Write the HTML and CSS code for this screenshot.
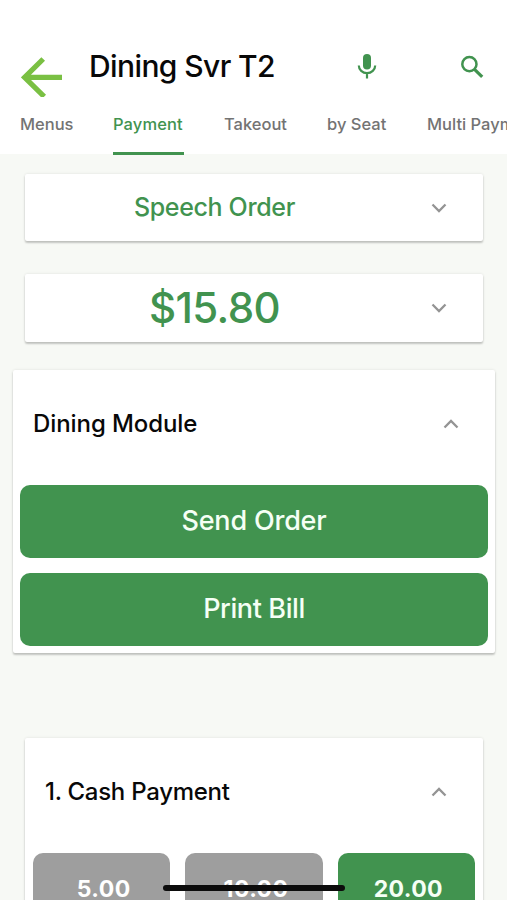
FILE: index.html
```html
<!DOCTYPE html>
<html lang="en">
<head>
<meta charset="utf-8">
<meta name="viewport" content="width=device-width, initial-scale=1">
<title>Dining Svr T2</title>
<link rel="stylesheet" href="styles.css">
</head>
<body>
<header class="header">
  <div class="topbar">
    <svg class="back" viewBox="0 0 42 40"><path d="M22.2 2 3.6 20.3 23.2 39.6M3.6 20.3H41" fill="none" stroke="#7ac043" stroke-width="5.2"/></svg>
    <h1 class="title">Dining Svr T2</h1>
    <svg class="mic" viewBox="0 0 20 26"><rect x="6" y="1" width="8" height="15.5" rx="4" fill="#41934f"/><path d="M1.8 12.5a8.2 7.6 0 0 0 16.4 0M10 20v5.5" fill="none" stroke="#41934f" stroke-width="2.2"/></svg>
    <svg class="search" viewBox="0 0 24 24"><circle cx="9.4" cy="9.2" r="7.1" fill="none" stroke="#41934f" stroke-width="2.5"/><path d="m14.5 14.3 7.7 7.6" stroke="#41934f" stroke-width="3.2"/></svg>
  </div>
  <nav class="tabs">
    <span class="tab menus">Menus</span>
    <span class="tab payment active">Payment</span>
    <span class="tab takeout">Takeout</span>
    <span class="tab seat">by Seat</span>
    <span class="tab multi">Multi Payment</span>
  </nav>
</header>
<main class="content">
  <section class="card row">
    <span class="label speech">Speech Order</span>
    <svg class="chevron" viewBox="0 0 16 10"><path d="m1.5 1.5 6.5 6.5 6.5-6.5"/></svg>
  </section>
  <section class="card row total">
    <span class="label amount">$15.80</span>
    <svg class="chevron" viewBox="0 0 16 10"><path d="m1.5 1.5 6.5 6.5 6.5-6.5"/></svg>
  </section>
  <section class="card module">
    <div class="card-head"><h2 class="heading dining">Dining Module</h2>
      <svg class="chevron" viewBox="0 0 16 10"><path d="m1.5 8.5 6.5-6.5 6.5 6.5"/></svg></div>
    <button class="button"><span class="send">Send Order</span></button>
    <button class="button"><span class="print">Print Bill</span></button>
  </section>
  <section class="card cash">
    <div class="card-head"><h2 class="heading cash-title">1. Cash Payment</h2>
      <svg class="chevron" viewBox="0 0 16 10"><path d="m1.5 8.5 6.5-6.5 6.5 6.5"/></svg></div>
    <div class="amounts">
      <button class="chip">5.00</button>
      <button class="chip">10.00</button>
      <button class="chip chosen">20.00</button>
    </div>
  </section>
</main>
<div class="home-bar"></div>
</body>
</html>
```
FILE: styles.css
```css
* { box-sizing: border-box; }
html, body { height: 100%; }
body {
  margin: 0;
  overflow: hidden;
  background: #f7f9f5;
  color: #080808;
  font-family: Inter, "Liberation Sans", sans-serif;
  font-weight: 500;
}
svg { display: block; flex: none; }
h1, h2 { margin: 0; font-weight: 500; white-space: nowrap; }
button { border: 0; padding: 0; font: inherit; color: #f5fff5; background: #41934f; }

.header { height: 154px; background: #fff; padding-top: 44px; }
.topbar { display: flex; height: 54px; padding-left: 21px; }
.back { width: 42px; height: 40px; margin-top: 13px; }
.title { width: 184px; margin-left: 26px; font-size: 30px; line-height: 44px; letter-spacing: -0.6px; }
.mic { width: 20px; height: 26px; margin: 9px 0 0 83.5px; }
.search { width: 24px; height: 24px; margin: 10.5px 0 0 83.5px; }
.tabs { display: flex; gap: 40px; height: 57px; padding-left: 20px; overflow: hidden; }
.tab { flex: none; font-size: 16.5px; line-height: 53px; color: #737373; white-space: nowrap; }
.menus { width: 53px; }
.payment { width: 71px; letter-spacing: 0.1px; }
.takeout { width: 63px; }
.seat { width: 60px; }
.active { color: #41934f; border-bottom: 3px solid #41934f; }

.card {
  background: #fff;
  border-radius: 2px;
  box-shadow: 0 2px 2px rgba(0, 0, 0, .2), 0 0 3px rgba(0, 0, 0, .1);
}
.content { display: flex; flex-direction: column; height: 746px; padding-top: 20px; }
.row { display: flex; flex: none; align-items: center; justify-content: space-between; height: 67px; margin: 0 24px 0 25px; padding-right: 36px; }
.total { margin-top: 33px; height: 68px; }
.label { flex: 1; text-align: center; color: #41934f; padding-right: 27px; line-height: 1; white-space: nowrap; }
.speech { font-size: 25px; letter-spacing: -0.35px; }
.amount { font-size: 42px; letter-spacing: -0.6px; }
.chevron { width: 16px; height: 10px; fill: none; stroke: #949494; stroke-width: 2.3; }

.module { flex: none; height: 283px; margin: 28px 12px 0 13px; padding: 0 7px; }
.card-head { display: flex; align-items: center; justify-content: space-between; height: 107px; }
.heading { font-size: 24px; line-height: 1; }
.dining { letter-spacing: -0.08px; }
.module .card-head { height: 115px; padding: 0 29px 8px 13px; }
.button { display: block; width: 100%; height: 73px; border-radius: 10px; padding-bottom: 2px; font-size: 27px; }
.button + .button { margin-top: 15px; }
.send { letter-spacing: -0.2px; }
.print { letter-spacing: -0.4px; }
.cash-title { letter-spacing: -0.28px; }

.cash { flex: none; height: 250px; margin: 85px 24px 0 25px; padding: 0 8px; }
.cash .card-head { height: 115px; padding: 0 28px 8px 12px; }
.amounts { display: flex; gap: 15px; }
.chip { flex: 1; height: 73px; padding: 0 0 2px 4px; border-radius: 10px; background: #9e9e9e; color: #fff; font-size: 23px; letter-spacing: 0.4px; font-weight: 700; }
.chosen { background: #41934f; color: #f5fff5; }
.home-bar { position: absolute; left: 163px; bottom: 9.5px; width: 182px; height: 6px; border-radius: 3px; background: #0c0c0c; }
```
